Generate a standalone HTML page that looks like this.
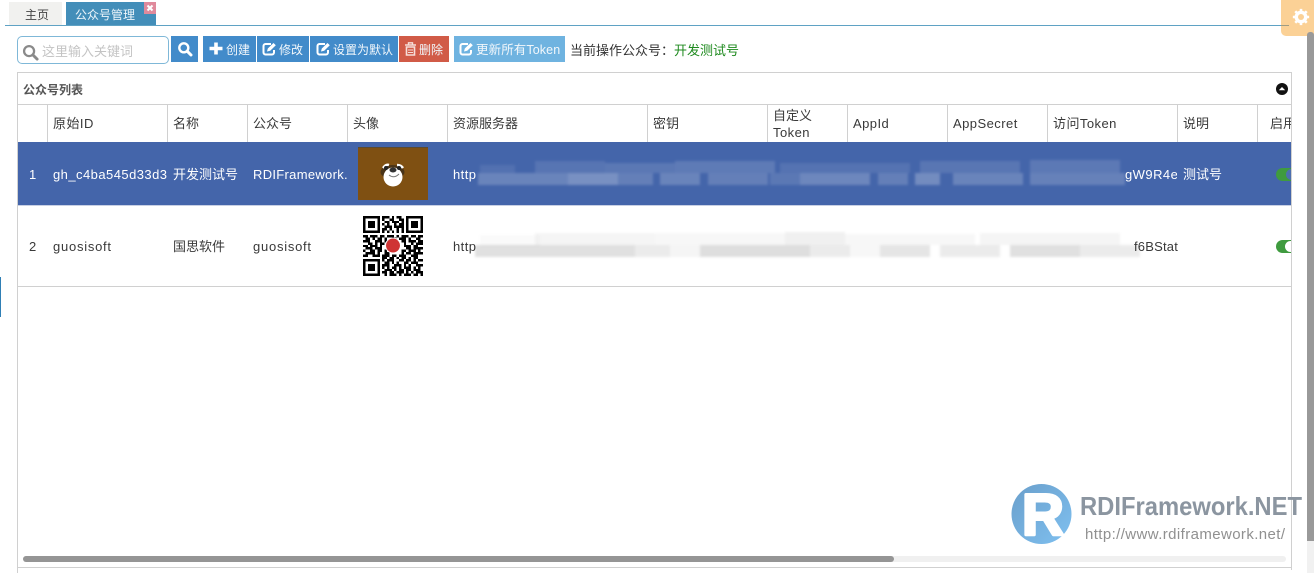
<!DOCTYPE html>
<html><head><meta charset="utf-8"><style>
html,body{margin:0;padding:0;background:#fff;width:1314px;height:573px;overflow:hidden}
body{position:relative;font-family:"Liberation Sans","Noto Sans CJK SC",sans-serif;font-size:13px;color:#393939}
.a{position:absolute}
.t{position:absolute;white-space:nowrap;line-height:18px}
.l{position:absolute;background:#d0d0d0}
.v{position:absolute;background:#d0d0d0;width:1px;top:105px;height:37px}
.b{position:absolute;top:36px;height:26px;background:#428bca;color:#fff}
.b span{position:absolute;top:6px;line-height:16px;white-space:nowrap;font-size:12px;color:#f2f7fb}
.b svg{position:absolute}
.w{color:#fff;letter-spacing:.45px}
.g{letter-spacing:.45px}
</style></head><body>
<!-- tabs -->
<div class="a" style="left:9px;top:2px;width:53px;height:23px;background:#f1f1ef"></div>
<div class="t" style="left:25px;top:6px;font-size:12px;color:#444">主页</div>
<div class="a" style="left:66px;top:2px;width:90px;height:23px;background:#438eb9"></div>
<div class="t" style="left:75px;top:6px;font-size:12px;color:#eef6fb">公众号管理</div>
<div class="a" style="left:144px;top:2px;width:12px;height:12px;background:#e08a9c"></div>
<svg class="a" style="left:144px;top:2px" width="12" height="12"><path d="M3.500 3.500l5 5M8.500 3.500l-5 5" stroke="#fff" stroke-width="2"/></svg>
<div class="a" style="left:5px;top:25px;width:1284px;height:1px;background:#5fa2c4"></div>
<!-- gear -->
<div class="a" style="left:1281px;top:0;width:33px;height:36px;background:#fbd196;border-bottom-left-radius:5px"></div>
<div class="a" style="left:1281px;top:25px;width:8px;height:1px;background:#a09c82"></div>
<svg class="a" style="left:1292px;top:8px" width="18" height="18" viewBox="0 0 21 21"><circle cx="10.500" cy="10.500" r="5.500" fill="none" stroke="#fff" stroke-width="4"/><path d="M10.500 1v19M1 10.500h19M3.800 3.800l13.400 13.400M17.200 3.800L3.800 17.200" stroke="#fff" stroke-width="3"/><circle cx="10.500" cy="10.500" r="3.500" fill="#fbd196"/></svg>
<!-- page scrollbar -->
<div class="a" style="left:1307px;top:32px;width:7px;height:509px;background:#999;border-radius:3px 3px 0 0"></div>
<div class="a" style="left:1307px;top:541px;width:7px;height:32px;background:#f1f1f1"></div>
<div class="a" style="left:0;top:277px;width:1px;height:40px;background:#2f7fb5"></div>
<!-- search -->
<div class="a" style="left:17px;top:36px;width:150px;height:26px;border:1px solid #7fb8d8;border-radius:5px;background:#fff"></div>
<svg class="a" style="left:22px;top:44px" width="17" height="17" viewBox="0 0 18 18"><circle cx="7.500" cy="7.500" r="5.300" fill="none" stroke="#8a8a8a" stroke-width="2.400"/><path d="M11.500 11.500L16 16" stroke="#8a8a8a" stroke-width="3" stroke-linecap="round"/></svg>
<div class="t" style="left:42px;top:43px;font-size:13px;color:#c4c4c4">这里输入关键词</div>
<div class="b" style="left:171px;width:27px">
<svg style="left:6px;top:5px" width="16" height="16" viewBox="0 0 16 16"><circle cx="6.800" cy="6.800" r="4.500" fill="none" stroke="#fff" stroke-width="2.400"/><path d="M10.300 10.300l3.700 3.700" stroke="#fff" stroke-width="3" stroke-linecap="round"/></svg></div>
<div class="b" style="left:203px;width:53px">
<svg style="left:6px;top:6px" width="14" height="14"><path d="M7 0.500v12M0.500 6.500h13" stroke="#fff" stroke-width="3.600"/></svg><span style="left:23px">创建</span></div>
<div class="b" style="left:257px;width:52px">
<svg style="left:5px;top:6px" width="15" height="14" viewBox="0 0 15 14"><path d="M9 2H3.500A2 2 0 0 0 1.500 4v6.500a2 2 0 0 0 2 2H10a2 2 0 0 0 2-2V8" fill="none" stroke="#fff" stroke-width="2"/><path d="M5 9.500l.8-3L11.500 1l2.300 2.300-5.600 5.500z" fill="#fff"/></svg><span style="left:22px">修改</span></div>
<div class="b" style="left:310px;width:88px">
<svg style="left:6px;top:6px" width="15" height="14" viewBox="0 0 15 14"><path d="M9 2H3.500A2 2 0 0 0 1.500 4v6.500a2 2 0 0 0 2 2H10a2 2 0 0 0 2-2V8" fill="none" stroke="#fff" stroke-width="2"/><path d="M5 9.500l.8-3L11.500 1l2.300 2.300-5.600 5.500z" fill="#fff"/></svg><span style="left:23px">设置为默认</span></div>
<div class="b" style="left:399px;width:50px;background:#d15b47">
<svg style="left:6px;top:6px" width="11" height="14" viewBox="0 0 11 14"><path d="M0 3h11M3.500 2.500V.8h4v1.700" stroke="#f6ded9" stroke-width="1.400" fill="none"/><path d="M1.500 5h8v8h-8z" fill="none" stroke="#f6ded9" stroke-width="1.600"/><path d="M3 8h5M3 10.500h5" stroke="#f6ded9"/></svg><span style="left:20px">删除</span></div>
<div class="b" style="left:454px;width:111px;background:#6fb3e0">
<svg style="left:5px;top:6px" width="15" height="14" viewBox="0 0 15 14"><path d="M9 2H3.500A2 2 0 0 0 1.500 4v6.500a2 2 0 0 0 2 2H10a2 2 0 0 0 2-2V8" fill="none" stroke="#fff" stroke-width="2"/><path d="M5 9.500l.8-3L11.500 1l2.300 2.300-5.600 5.500z" fill="#fff"/></svg><span style="left:22px;letter-spacing:.1px;font-size:12.500px">更新所有Token</span></div>
<div class="t" style="left:570px;top:42px;font-size:13px;color:#333">当前操作公众号：</div>
<div class="t" style="left:674px;top:42px;font-size:13px;color:#1e8a1e">开发测试号</div>
<!-- panel frame -->
<div class="l" style="left:17px;top:72px;width:1275px;height:1px"></div>
<div class="l" style="left:17px;top:72px;width:1px;height:501px"></div>
<div class="l" style="left:1291px;top:72px;width:1px;height:498px"></div>
<div class="l" style="left:17px;top:104px;width:1275px;height:1px"></div>
<div class="t" style="left:23px;top:81px;font-size:12px;font-weight:bold;color:#555">公众号列表</div>
<svg class="a" style="left:1276px;top:83px" width="12" height="12"><circle cx="6" cy="6" r="6" fill="#111"/><path d="M2.800 7.300L6 4l3.200 3.300z" fill="#fff"/></svg>
<!-- header cells -->
<div class="v" style="left:47px"></div><div class="v" style="left:167px"></div><div class="v" style="left:247px"></div><div class="v" style="left:347px"></div><div class="v" style="left:447px"></div><div class="v" style="left:647px"></div><div class="v" style="left:767px"></div><div class="v" style="left:847px"></div><div class="v" style="left:947px"></div><div class="v" style="left:1047px"></div><div class="v" style="left:1177px"></div><div class="v" style="left:1257px"></div>
<div class="t g" style="left:53px;top:115px">原始ID</div>
<div class="t" style="left:173px;top:115px">名称</div>
<div class="t" style="left:253px;top:115px">公众号</div>
<div class="t" style="left:353px;top:115px">头像</div>
<div class="t" style="left:453px;top:115px">资源服务器</div>
<div class="t" style="left:653px;top:115px">密钥</div>
<div class="t" style="left:773px;top:107px">自定义</div>
<div class="t g" style="left:773px;top:124px">Token</div>
<div class="t g" style="left:853px;top:115px">AppId</div>
<div class="t g" style="left:953px;top:115px">AppSecret</div>
<div class="t g" style="left:1053px;top:115px">访问Token</div>
<div class="t" style="left:1183px;top:115px">说明</div>
<div class="a" style="left:1270px;top:115px;width:21px;height:18px;overflow:hidden"><div class="t" style="left:0;top:0">启用</div></div>
<!-- rows -->
<div class="a" style="left:18px;top:142px;width:1273px;height:63px;background:#4465aa"></div>
<div class="a" style="left:18px;top:205px;width:1273px;height:1px;background:#c8d0e4"></div>
<div class="l" style="left:18px;top:286px;width:1273px;height:1px"></div>
<div class="t w" style="left:29px;top:166px;letter-spacing:0">1</div>
<div class="a" style="left:53px;top:166px;width:114px;height:18px;overflow:hidden"><div class="t w" style="left:0;top:0">gh_c4ba545d33d3</div></div>
<div class="t w" style="left:173px;top:166px;letter-spacing:0">开发测试号</div>
<div class="a" style="left:253px;top:166px;width:95px;height:18px;overflow:hidden"><div class="t w" style="left:0;top:0;letter-spacing:.3px">RDIFramework.</div></div>
<div class="t w" style="left:453px;top:166px">http</div>
<div class="a" style="left:1125px;top:166px;width:52px;height:18px;overflow:hidden"><div class="t w" style="left:0;top:0">gW9R4e</div></div>
<div class="t w" style="left:1183px;top:166px;letter-spacing:0">测试号</div>
<div class="t" style="left:29px;top:238px">2</div>
<div class="t" style="left:53px;top:238px;letter-spacing:.75px">guosisoft</div>
<div class="t" style="left:173px;top:238px">国思软件</div>
<div class="t" style="left:253px;top:238px;letter-spacing:.75px">guosisoft</div>
<div class="t g" style="left:453px;top:238px">http</div>
<div class="t" style="left:1134px;top:238px;letter-spacing:.2px">f6BStat</div>
<!-- blurred -->
<svg class="a" style="left:470px;top:155px" width="680" height="110" viewBox="0 0 680 110">
<defs><filter id="f" x="-5%" y="-30%" width="110%" height="160%"><feGaussianBlur stdDeviation="1.200"/></filter></defs>
<g filter="url(#f)">
<g fill="#fff">
<rect x="10" y="10" width="35" height="8" opacity=".08"/><rect x="65" y="6" width="70" height="12" opacity=".1"/><rect x="135" y="8" width="70" height="10" opacity=".12"/><rect x="205" y="6" width="100" height="12" opacity=".14"/><rect x="310" y="8" width="130" height="10" opacity=".09"/><rect x="450" y="6" width="100" height="12" opacity=".11"/><rect x="560" y="5" width="90" height="13" opacity=".13"/>
<rect x="8" y="18" width="90" height="12" opacity=".2"/><rect x="98" y="18" width="50" height="12" opacity=".28"/><rect x="148" y="18" width="35" height="12" opacity=".17"/><rect x="190" y="18" width="40" height="12" opacity=".2"/><rect x="238" y="18" width="60" height="12" opacity=".17"/><rect x="300" y="18" width="30" height="12" opacity=".12"/><rect x="330" y="18" width="70" height="12" opacity=".22"/><rect x="408" y="18" width="30" height="12" opacity=".17"/><rect x="445" y="18" width="25" height="12" opacity=".25"/><rect x="483" y="18" width="70" height="12" opacity=".2"/><rect x="560" y="18" width="95" height="12" opacity=".18"/>
</g>
<g fill="#000">
<rect x="10" y="80" width="60" height="12" opacity=".02"/><rect x="65" y="78" width="120" height="12" opacity=".04"/><rect x="185" y="78" width="130" height="12" opacity=".03"/><rect x="315" y="77" width="60" height="13" opacity=".06"/><rect x="375" y="79" width="130" height="11" opacity=".03"/><rect x="510" y="78" width="140" height="12" opacity=".04"/>
<rect x="5" y="90" width="160" height="12" opacity=".12"/><rect x="165" y="90" width="35" height="12" opacity=".08"/><rect x="200" y="90" width="30" height="12" opacity=".04"/><rect x="230" y="90" width="110" height="12" opacity=".13"/><rect x="340" y="90" width="40" height="12" opacity=".08"/><rect x="380" y="90" width="30" height="12" opacity=".03"/><rect x="410" y="90" width="50" height="12" opacity=".1"/><rect x="470" y="90" width="60" height="12" opacity=".08"/><rect x="540" y="90" width="70" height="12" opacity=".12"/><rect x="610" y="90" width="60" height="12" opacity=".08"/>
</g></g></svg>
<!-- bear -->
<svg class="a" style="left:358px;top:147px" width="70" height="53" viewBox="0 0 70 53">
<rect width="70" height="53" fill="#7f5012"/><rect width="70" height="1" fill="#5c4a30"/>
<ellipse cx="34.500" cy="25" rx="12" ry="7" fill="#4a3418"/>
<circle cx="35" cy="30" r="9.500" fill="#fff"/>
<path d="M25 21q3-4 6-3M39 18q4 0 6 3" stroke="#fff" stroke-width="2.500" fill="none"/>
<circle cx="28" cy="21" r="2" fill="#222"/><circle cx="41" cy="21" r="2" fill="#222"/>
<ellipse cx="35" cy="23" rx="3.500" ry="2.500" fill="#333"/>
<path d="M31 28q5 4 10-1" stroke="#777" fill="none"/>
</svg>
<!-- QR -->
<svg class="a" style="left:363px;top:216px" width="60" height="60" viewBox="0 0 25 25" shape-rendering="crispEdges">
<g fill="none" stroke="#000" stroke-width="1">
<path d="M.5.500h6v6h-6zM18.500.500h6v6h-6zM.5 18.500h6v6h-6z"/>
<path d="M8 .5h3M12 .5h1M14 .5h2M8 1.500h1M11 1.500h2M15 1.500h2M9 2.500h2M12 2.500h3M16 2.500h1M8 3.500h1M10 3.500h1M13 3.500h1M15 3.500h2M9 4.500h3M13 4.500h4M8 5.500h2M11 5.500h1M14 5.500h1M16 5.500h1M8 6.500h1M10 6.500h1M12 6.500h1M14 6.500h1M16 6.500h1"/>
<path d="M0 8.500h2M3 8.500h3M7 8.500h2M10 8.500h3M14 8.500h1M16 8.500h3M20 8.500h2M23 8.500h2M1 9.500h2M4 9.500h1M6 9.500h2M9 9.500h1M12 9.500h2M15 9.500h3M19 9.500h1M22 9.500h2M0 10.500h3M5 10.500h3M9 10.500h2M16 10.500h2M19 10.500h3M23 10.500h2M2 11.500h2M5 11.500h1M7 11.500h2M17 11.500h1M20 11.500h1M22 11.500h3M0 12.500h2M3 12.500h3M7 12.500h1M17 12.500h3M21 12.500h2M1 13.500h3M5 13.500h3M18 13.500h2M21 13.500h4M0 14.500h1M3 14.500h2M6 14.500h2M9 14.500h1M16 14.500h2M19 14.500h3M23 14.500h1M1 15.500h4M6 15.500h1M9 15.500h2M16 15.500h1M18 15.500h2M21 15.500h4M0 16.500h2M4 16.500h3M8 16.500h3M12 16.500h2M15 16.500h3M20 16.500h3"/>
<path d="M8 17.500h2M11 17.500h2M14 17.500h1M16 17.500h2M19 17.500h1M21 17.500h2M8 18.500h1M10 18.500h3M15 18.500h2M18 18.500h2M21 18.500h1M23 18.500h2M9 19.500h2M12 19.500h1M14 19.500h1M17 19.500h2M20 19.500h3M8 20.500h3M13 20.500h3M17 20.500h1M19 20.500h1M22 20.500h3M8 21.500h1M10 21.500h1M12 21.500h2M15 21.500h1M17 21.500h3M21 21.500h1M23 21.500h1M9 22.500h3M13 22.500h1M15 22.500h2M18 22.500h2M21 22.500h3M8 23.500h2M11 23.500h2M14 23.500h3M18 23.500h1M20 23.500h1M22 23.500h3M9 24.500h1M11 24.500h3M15 24.500h1M17 24.500h3M21 24.500h2M24 24.500h1"/>
</g>
<rect x="2" y="2" width="3" height="3" fill="#000"/><rect x="20" y="2" width="3" height="3" fill="#000"/><rect x="2" y="20" width="3" height="3" fill="#000"/>
<circle cx="12.500" cy="12.300" r="3.300" fill="#fff" shape-rendering="auto"/>
<circle cx="12.500" cy="12.300" r="2.900" fill="#cf3434" shape-rendering="auto"/>
</svg>
<!-- toggles -->
<div class="a" style="left:1276px;top:166px;width:15px;height:15px;overflow:hidden"><div class="a" style="left:0;top:2px;width:30px;height:13px;border-radius:6.500px;background:#3f9b3f"></div><div class="a" style="left:10px;top:3px;width:11px;height:11px;border-radius:6px;background:#4c6fb0"></div></div>
<div class="a" style="left:1276px;top:240px;width:15px;height:13px;overflow:hidden"><div class="a" style="left:0;top:0;width:30px;height:13px;border-radius:6.500px;background:#3f9b3f"></div><div class="a" style="left:9px;top:1px;width:11px;height:11px;border-radius:6px;background:#fff"></div></div>
<!-- h scrollbar -->
<div class="a" style="left:23px;top:556px;width:1263px;height:6px;background:#f0f0f0;border-radius:3px"></div>
<div class="a" style="left:23px;top:556px;width:871px;height:6px;background:#959595;border-radius:3px"></div>
<div class="l" style="left:17px;top:567px;width:1275px;height:1px"></div>
<!-- watermark -->
<svg class="a" style="left:1005px;top:478px" width="309" height="72" viewBox="0 0 309 72">
<defs><linearGradient id="lg" x1="0" y1="0" x2="1" y2="1"><stop offset="0" stop-color="#6a9fcb"/><stop offset="1" stop-color="#7fc0f0"/></linearGradient></defs>
<circle cx="36.500" cy="36" r="30" fill="url(#lg)"/>
<text x="17" y="57" font-family="Liberation Sans" font-weight="bold" font-size="58" fill="#fff" stroke="#fff" stroke-width="3" stroke-linejoin="round">R</text>
<text x="75" y="37" font-family="Liberation Sans" font-weight="bold" font-size="26" fill="#8b95a0" textLength="222" lengthAdjust="spacingAndGlyphs">RDIFramework.NET</text>
<text x="80" y="61" font-family="Liberation Sans" font-size="15" fill="#909090" textLength="200">http://www.rdiframework.net/</text>
</svg>
</body></html>
